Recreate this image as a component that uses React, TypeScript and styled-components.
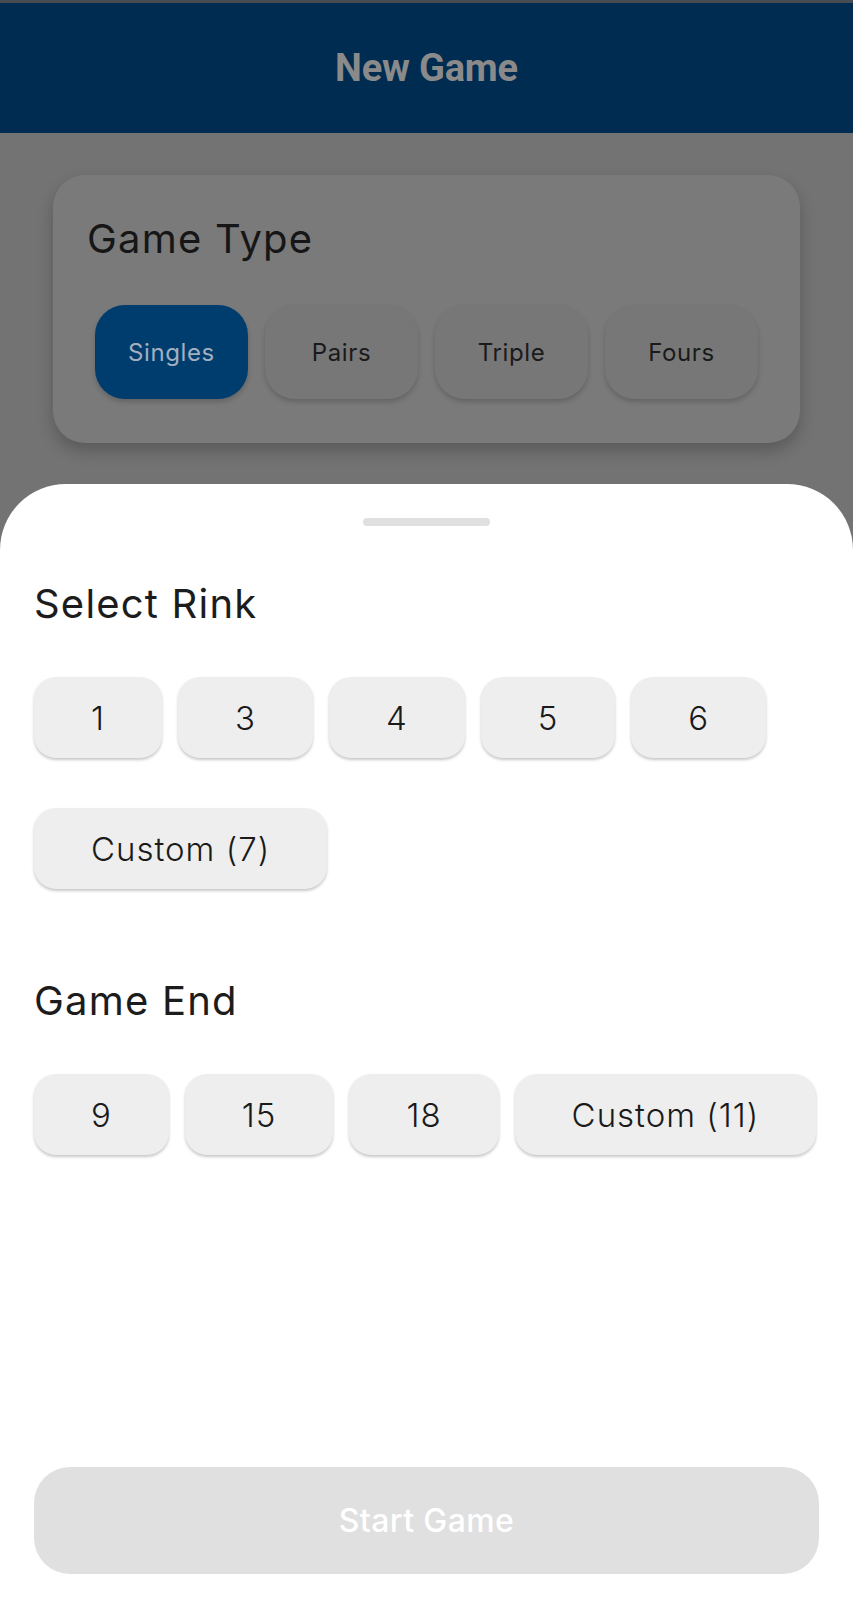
import React, { useState } from "react";
import styled, { createGlobalStyle } from "styled-components";

const GlobalStyle = createGlobalStyle`
  html, body { margin: 0; padding: 0; background: #747374; }
  * { box-sizing: border-box; }
  body { font-family: Inter, "Noto Sans", sans-serif; }
`;

const Screen = styled.div`
  min-height: 1600px;
  display: flex;
  flex-direction: column;
  background: #747374;
`;

const Header = styled.header`
  height: 133px;
  border-top: 3px solid #484c53;
  background: #002c51;
  display: flex;
  align-items: center;
  justify-content: center;
`;

const HeaderTitle = styled.h1`
  margin: 0;
  font-family: Roboto, "Liberation Sans", sans-serif;
  font-weight: 700;
  font-size: 38px;
  color: #8a8a8a;
  letter-spacing: -0.2px;
`;

const Main = styled.main`
  padding: 42px 53px 41px;
`;

const Card = styled.section`
  background: #7a7a7a;
  border-radius: 32px;
  padding: 41px 42px 44px;
  box-shadow: 0 8px 16px rgba(0, 0, 0, 0.22);
`;

const CardTitle = styled.h2`
  margin: 0 0 43px -8px;
  font-size: 40px;
  line-height: 46px;
  font-weight: 400;
  letter-spacing: 1.2px;
  color: #161616;
`;

const TypeRow = styled.div`
  display: grid;
  grid-template-columns: repeat(4, 1fr);
  gap: 17px;
`;

const TypeChip = styled.button<{ $active?: boolean }>`
  height: 94px;
  border: none;
  border-radius: 30px;
  font-family: inherit;
  font-size: 24px;
  font-weight: 400;
  letter-spacing: 0.6px;
  background: ${(p) => (p.$active ? "#003d6f" : "#777777")};
  color: ${(p) => (p.$active ? "#a3afbf" : "#1a1a1a")};
  box-shadow: 0 3px 5px rgba(0, 0, 0, 0.18);
`;

const Sheet = styled.section`
  flex: 1;
  background: #ffffff;
  border-radius: 66px 66px 0 0;
  padding: 34px 34px 26px;
  display: flex;
  flex-direction: column;
`;

const Handle = styled.div`
  align-self: center;
  width: 127px;
  height: 8px;
  border-radius: 4px;
  background: #e0e0e0;
`;

const SectionTitle = styled.h2<{ $gap: number }>`
  margin: ${(p) => p.$gap}px 0 0 0;
  font-size: 40px;
  line-height: 46px;
  font-weight: 400;
  letter-spacing: 1.2px;
  color: #1c1c1c;
`;

const ChipRow = styled.div`
  margin-top: 50px;
  display: flex;
  flex-wrap: wrap;
  gap: 50px 16px;
`;

const Chip = styled.button`
  height: 81px;
  padding: 0 57px;
  border: none;
  border-radius: 22px;
  background: #eeeeee;
  color: #1a1a1a;
  font-family: inherit;
  font-size: 33px;
  font-weight: 300;
  letter-spacing: 1px;
  box-shadow: 0 2px 3px rgba(0, 0, 0, 0.22);
`;

const StartButton = styled.button`
  margin-top: auto;
  height: 107px;
  border: none;
  border-radius: 36px;
  background: #e0e0e0;
  color: #ffffff;
  font-family: inherit;
  font-size: 32px;
  font-weight: 500;
  letter-spacing: 0.4px;
`;

const gameTypes = ["Singles", "Pairs", "Triple", "Fours"];
const rinks = ["1", "3", "4", "5", "6", "Custom (7)"];
const ends = ["9", "15", "18", "Custom (11)"];

export default function App() {
  const [type, setType] = useState("Singles");
  return (
    <>
      <GlobalStyle />
      <Screen>
        <Header>
          <HeaderTitle>New Game</HeaderTitle>
        </Header>
        <Main>
          <Card>
            <CardTitle>Game Type</CardTitle>
            <TypeRow>
              {gameTypes.map((t) => (
                <TypeChip key={t} $active={t === type} onClick={() => setType(t)}>
                  {t}
                </TypeChip>
              ))}
            </TypeRow>
          </Card>
        </Main>
        <Sheet>
          <Handle />
          <SectionTitle $gap={55}>Select Rink</SectionTitle>
          <ChipRow>
            {rinks.map((r) => (
              <Chip key={r}>{r}</Chip>
            ))}
          </ChipRow>
          <SectionTitle $gap={89}>Game End</SectionTitle>
          <ChipRow>
            {ends.map((e) => (
              <Chip key={e}>{e}</Chip>
            ))}
          </ChipRow>
          <StartButton>Start Game</StartButton>
        </Sheet>
      </Screen>
    </>
  );
}
